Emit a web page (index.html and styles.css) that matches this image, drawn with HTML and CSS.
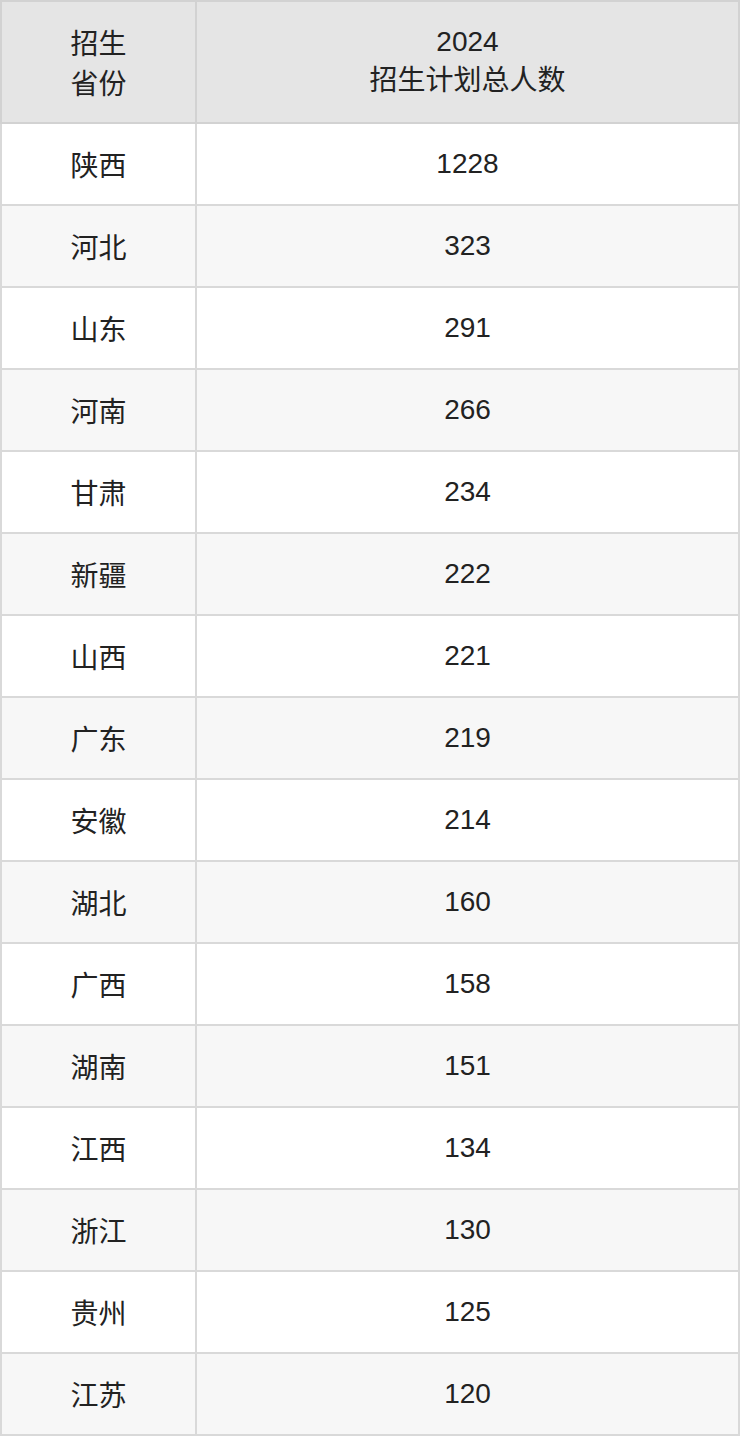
FILE: index.html
```html
<!DOCTYPE html>
<html lang="zh">
<head>
<meta charset="utf-8">
<link rel="stylesheet" href="styles.css">
</head>
<body>
<table class="plan">
<colgroup><col class="c1"><col class="c2"></colgroup>
<thead>
<tr><th>招生<br>省份</th><th>2024<br>招生计划总人数</th></tr>
</thead>
<tbody>
<tr><td>陕西</td><td>1228</td></tr>
<tr><td>河北</td><td>323</td></tr>
<tr><td>山东</td><td>291</td></tr>
<tr><td>河南</td><td>266</td></tr>
<tr><td>甘肃</td><td>234</td></tr>
<tr><td>新疆</td><td>222</td></tr>
<tr><td>山西</td><td>221</td></tr>
<tr><td>广东</td><td>219</td></tr>
<tr><td>安徽</td><td>214</td></tr>
<tr><td>湖北</td><td>160</td></tr>
<tr><td>广西</td><td>158</td></tr>
<tr><td>湖南</td><td>151</td></tr>
<tr><td>江西</td><td>134</td></tr>
<tr><td>浙江</td><td>130</td></tr>
<tr><td>贵州</td><td>125</td></tr>
<tr><td>江苏</td><td>120</td></tr>
</tbody>
</table>
</body>
</html>
```
FILE: styles.css
```css
html, body {
  margin: 0;
  padding: 0;
  background: #ffffff;
}
.plan {
  width: 740px;
  border-collapse: collapse;
  table-layout: fixed;
  font-family: "Liberation Sans", "Noto Sans CJK SC", sans-serif;
  font-size: 28px;
  color: #222222;
}
.c1 { width: 195px; }
.plan th, .plan td {
  border: 2px solid #d9d9d9;
  text-align: center;
  vertical-align: middle;
  padding: 0;
  font-weight: normal;
  line-height: normal;
}
.plan th {
  background: #e5e5e5;
  height: 120px;
  border-color: #d2d2d2;
}
.plan td {
  height: 80px;
}
.plan tbody tr:nth-child(even) td {
  background: #f7f7f7;
}
```
